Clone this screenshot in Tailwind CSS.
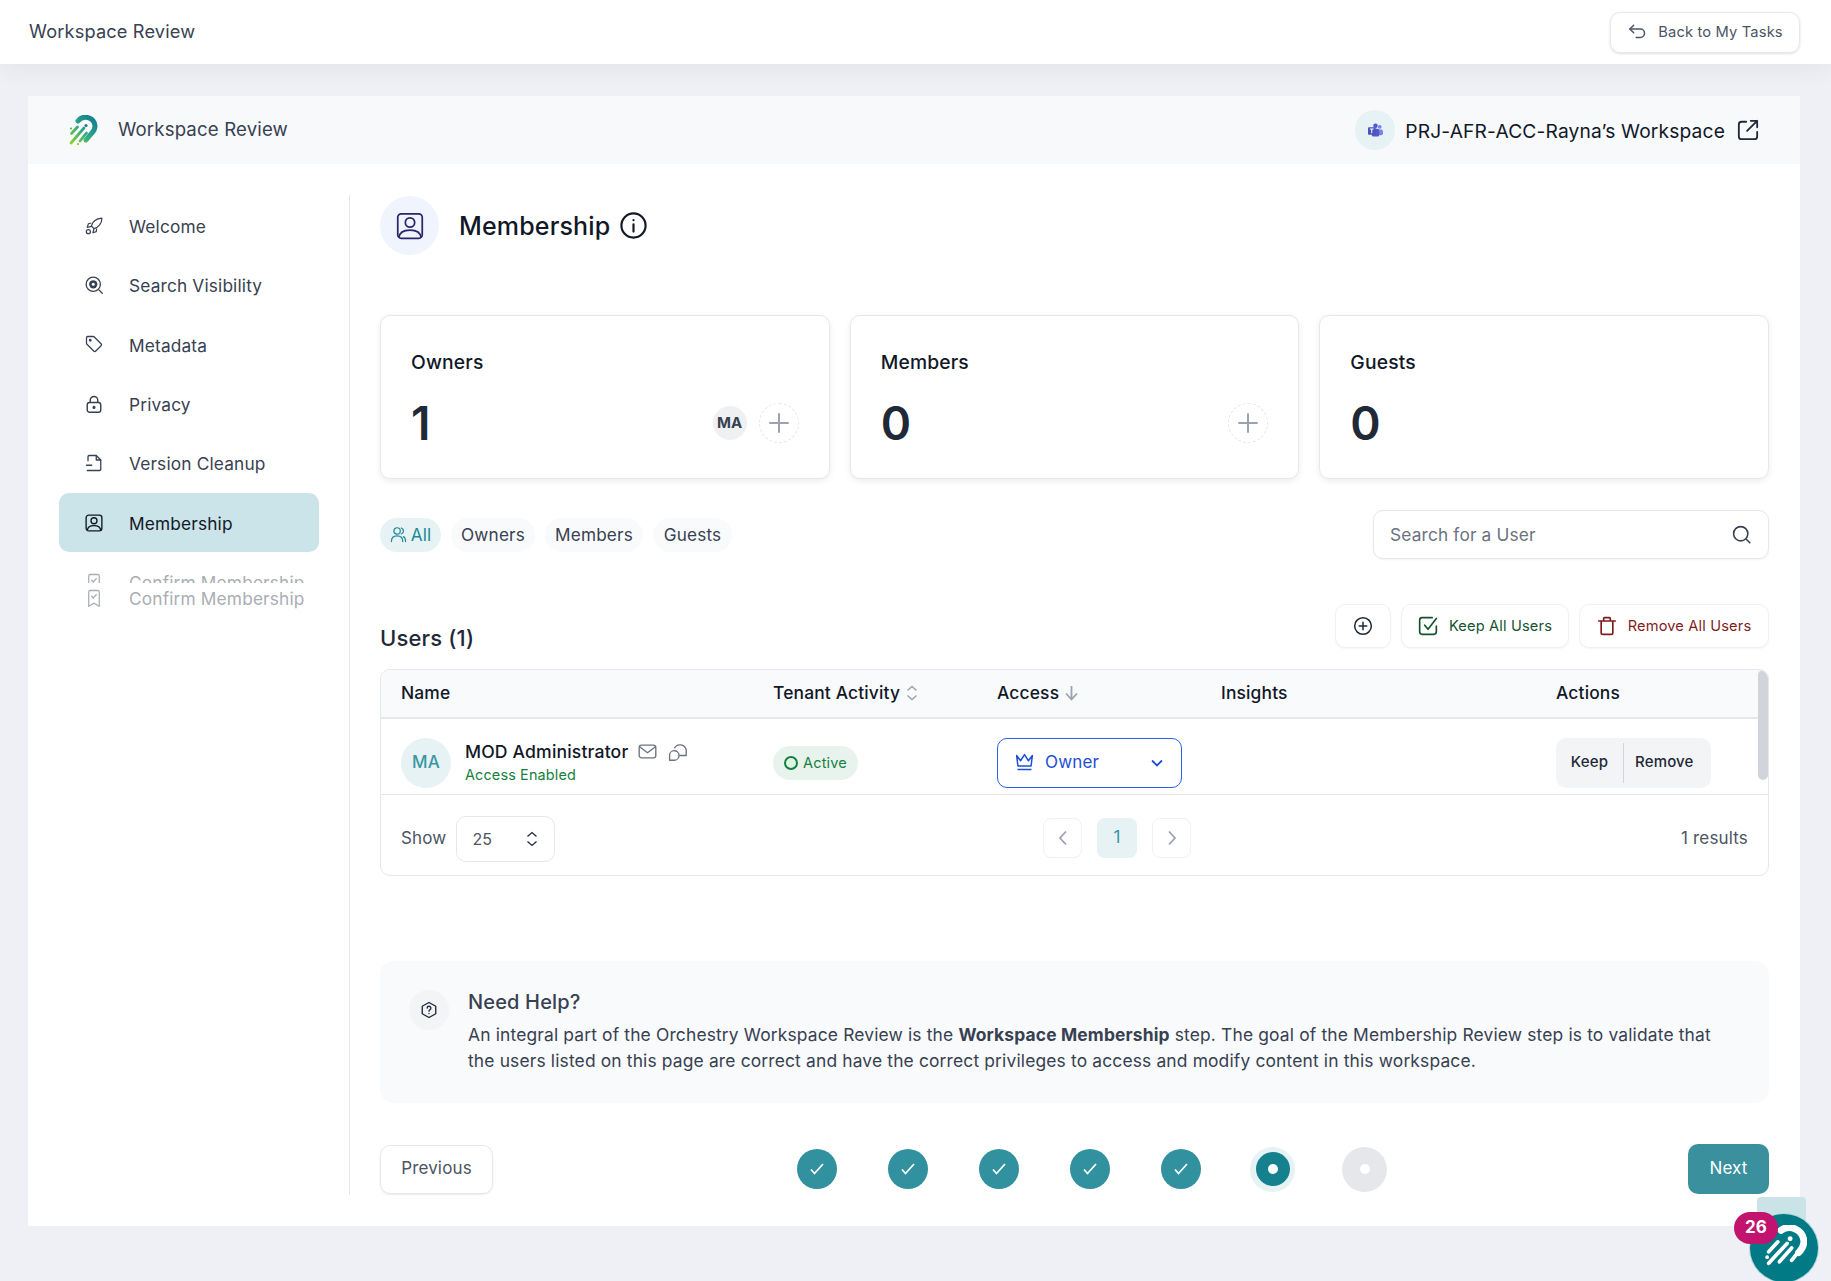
<!DOCTYPE html>
<html lang="en"><head><meta charset="utf-8"><title>Workspace Review</title>
<script src="https://cdn.jsdelivr.net/npm/@tailwindcss/browser@4"></script></head>
<body class="relative w-[1831px] h-[1281px] overflow-hidden bg-[#eff0f6] [font-family:Inter,sans-serif] tracking-[0.01em] text-[#374151]">
<svg width="0" height="0" class="absolute"><defs><linearGradient id="lg" gradientUnits="userSpaceOnUse" x1="3" y1="29" x2="26" y2="3"><stop offset="0" stop-color="#8fd321"/><stop offset=".5" stop-color="#2ea88a"/><stop offset="1" stop-color="#137f8e"/></linearGradient></defs></svg>

<header class="h-[64px] bg-white shadow-[0_6px_24px_rgba(0,0,0,0.05)] flex items-center justify-between pl-[29px] pr-[31px] relative">
  <span class="text-[18.2px] text-[#374151]">Workspace Review</span>
  <button class="h-[41px] w-[190px] rounded-[10px] border border-[#e5e7eb] shadow-sm flex items-center justify-center gap-[11px] text-[14.7px] text-[#4b5563]">
    <svg class="w-[20px] h-[20px]" viewBox="0 0 24 24" fill="none" stroke="#4b5563" stroke-width="1.800" stroke-linecap="round" stroke-linejoin="round"><path d="M8 4 3.500 8.500 8 13"/><path d="M3.500 8.500H16a5 5 0 0 1 0 10h-5"/></svg>
    Back to My Tasks</button>
</header>

<main class="relative mt-[32px] ml-[28px] mr-[31px] h-[1130px] bg-white flex flex-col">
  <div class="h-[68px] bg-[#f8f9fb] flex items-center justify-between pl-[40px] pr-[41px]">
    <div class="flex items-center gap-[20px]">
      <svg class="w-[30px] h-[30px]" viewBox="0 0 30 30" fill="none" stroke="url(#lg)" stroke-linecap="round"><path d="M10 6A9.500 9.500 0 0 1 27 11c0 3-1.500 5.500-3.500 7.500L18 25" stroke-width="5"/><path d="M16 13 3 28M9.500 12 3.500 18.500M18.500 18 12 26" stroke-width="2.700"/><circle cx="18" cy="10.500" r="1.600" fill="#137f8e" stroke="none"/><circle cx="3" cy="13.500" r="1.100" fill="#5ab84b" stroke="none"/><circle cx="10" cy="29" r="1.100" fill="#8fd321" stroke="none"/></svg>
      <span class="text-[18.6px] text-[#374151]">Workspace Review</span>
    </div>
    <div class="flex items-center">
      <span class="w-[40px] h-[40px] rounded-full bg-[#e6f2f3] flex items-center justify-center">
        <svg class="w-[15px] h-[15px]" viewBox="0 0 16 16"><circle cx="12.500" cy="4" r="2" fill="#7b83eb"/><rect x="10" y="7" width="6" height="6" rx="2" fill="#7b83eb"/><circle cx="8" cy="3" r="2.400" fill="#5059c9"/><rect x="4" y="6" width="8" height="8.500" rx="2" fill="#5059c9"/><rect x="0" y="4.500" width="8" height="8" rx="1" fill="#4b53bc"/><path d="M2 6.500h4M4 6.500v4.500" stroke="#fff" stroke-width="1.100"/></svg>
      </span>
      <span class="ml-[10px] text-[19.2px] text-[#111827] pt-[2px]">PRJ-AFR-ACC-Rayna’s Workspace</span>
      <svg class="ml-[12px] w-[22px] h-[22px]" viewBox="0 0 24 24" fill="none" stroke="#1f2937" stroke-width="2" stroke-linecap="round" stroke-linejoin="round"><path d="M10 3H5a3 3 0 0 0-3 3v13a3 3 0 0 0 3 3h14a3 3 0 0 0 3-3v-5"/><path d="M15 2h7v7M22 2 11 13"/></svg>
    </div>
  </div>

  <div class="flex flex-1 pt-[31px] pb-[31px]">
    <nav class="w-[322px] pt-[1px] pl-[31px] pr-[30px] border-r border-[#e5e7eb] text-[17.3px] text-[#374151]">
      <div class="h-[59.4px] flex items-center pl-[26px] gap-[26px]"><svg class="w-[18px] h-[18px] shrink-0" viewBox="0 0 24 24" fill="none" stroke="#374151" stroke-width="1.600" stroke-linejoin="round"><path d="M22.500 1.500C15.500 2 10 6 8.500 12l3.500 3.500c6-1.500 10.500-7 10.500-14z"/><path d="M8.500 8 4.500 9 3 14l5.500-1.500M15.500 15.500 15 19.500 10.500 21l1.500-5.500"/><circle cx="4.500" cy="19.500" r="2.700"/></svg><span class="pt-[2px]">Welcome</span></div>
      <div class="h-[59.4px] flex items-center pl-[26px] gap-[26px]"><svg class="w-[18px] h-[18px] shrink-0" viewBox="0 0 24 24" fill="none" stroke="#374151" stroke-width="1.700" stroke-linecap="round"><circle cx="11" cy="11" r="9.500"/><path d="m19 19 4 4"/><circle cx="11" cy="11" r="5.500" fill="#374151" stroke="none"/><circle cx="11" cy="11" r="2" fill="#fff" stroke="none"/></svg><span class="pt-[2px]">Search Visibility</span></div>
      <div class="h-[59.4px] flex items-center pl-[26px] gap-[26px]"><svg class="w-[18px] h-[18px] shrink-0" viewBox="0 0 24 24" fill="none" stroke="#374151" stroke-width="1.700" stroke-linejoin="round"><path d="M2 3.500A1.500 1.500 0 0 1 3.500 2H11a2 2 0 0 1 1.400.6l9 9a2 2 0 0 1 0 2.800l-7 7a2 2 0 0 1-2.800 0l-9-9A2 2 0 0 1 2 11z"/><circle cx="7" cy="7" r="1" fill="#374151"/></svg><span class="pt-[2px]">Metadata</span></div>
      <div class="h-[59.4px] flex items-center pl-[26px] gap-[26px]"><svg class="w-[18px] h-[18px] shrink-0" viewBox="0 0 24 24" fill="none" stroke="#374151" stroke-width="1.900" stroke-linejoin="round"><rect x="3" y="10" width="18" height="13" rx="3"/><path d="M7 10V7a5 5 0 0 1 10 0v3"/><circle cx="12" cy="16.500" r="1.100" fill="#374151"/></svg><span class="pt-[2px]">Privacy</span></div>
      <div class="h-[59.4px] flex items-center pl-[26px] gap-[26px]"><svg class="w-[18px] h-[18px] shrink-0" viewBox="0 0 24 24" fill="none" stroke="#374151" stroke-width="1.700" stroke-linecap="round" stroke-linejoin="round"><path d="M4 9V3.500A1.500 1.500 0 0 1 5.500 2H15l6 6v12.500a1.500 1.500 0 0 1-1.500 1.500H3"/><path d="M15 2v6h6M2 15h7"/></svg><span class="pt-[2px]">Version Cleanup</span></div>
      <div class="h-[59.4px] flex items-center pl-[26px] gap-[26px] bg-[#cbe4e9] rounded-[10px] text-[#111827]"><svg class="w-[18px] h-[18px] shrink-0" viewBox="0 0 24 24" fill="none" stroke="#111827" stroke-width="1.800"><rect x="1.500" y="1.500" width="21" height="21" rx="3.500"/><circle cx="12" cy="9" r="4"/><path d="M3 22c.5-5 4-6.500 9-6.500s8.500 1.500 9 6.500"/></svg><span class="pt-[2px]">Membership</span></div>
      <div class="h-[30.7px] overflow-hidden"><div class="h-[59.4px] flex items-center pl-[26px] gap-[26px] text-[#a9adb5]"><svg class="w-[18px] h-[18px] shrink-0" viewBox="0 0 24 24" fill="none" stroke="#a9adb5" stroke-width="1.700"><path d="M5 23V4a2 2 0 0 1 2-2h10a2 2 0 0 1 2 2v19l-7-4z"/><path d="m8.500 9 2.500 3 4.500-5"/></svg><span class="pt-[2px]">Confirm Membership</span></div></div>
      <div class="h-[30px] flex items-center pl-[26px] gap-[26px] text-[#a9adb5]"><svg class="w-[18px] h-[18px] shrink-0" viewBox="0 0 24 24" fill="none" stroke="#a9adb5" stroke-width="1.700"><path d="M5 23V4a2 2 0 0 1 2-2h10a2 2 0 0 1 2 2v19l-7-4z"/><path d="m8.500 9 2.500 3 4.500-5"/></svg><span class="pt-[2px]">Confirm Membership</span></div>
    </nav>

    <section class="flex-1 pt-[1px] pl-[30px] pr-[31px]">
      <div class="h-[59px] flex items-center">
        <span class="w-[59px] h-[59px] rounded-full bg-[#f0f4fd] flex items-center justify-center"><svg class="w-[28px] h-[28px]" viewBox="0 0 24 24" fill="none" stroke="#27276b" stroke-width="1.500"><rect x="1.500" y="1.500" width="21" height="21" rx="3"/><circle cx="12" cy="9" r="4"/><path d="M2.500 22c.5-5 4-6.500 9.500-6.500s9 1.500 9.500 6.500"/></svg></span>
        <h1 class="ml-[20px] text-[25px] font-medium text-[#111827] pt-[2px]">Membership</h1>
        <svg class="ml-[9px] w-[29px] h-[29px]" viewBox="0 0 24 24" fill="none" stroke="#111827" stroke-width="1.800" stroke-linecap="round"><circle cx="12" cy="12" r="10"/><path d="M12 11v6M12 7.500v.1"/></svg>
      </div>

      <div class="mt-[60px] grid grid-cols-3 gap-[20px]">
        <div class="h-[164px] rounded-[10px] border border-[#e5e7eb] shadow-[0_2px_6px_rgba(0,0,0,0.08)] pl-[30px] pr-[30px] pt-[33px]">
          <div class="text-[19.3px] font-medium text-[#111827] leading-[26px]">Owners</div>
          <div class="mt-[25px] flex items-center justify-between h-[46px]"><span class="text-[46px] font-semibold text-[#1f2937]">1</span>
            <div class="flex items-center gap-[12px]"><span class="w-[34px] h-[34px] rounded-full bg-[#eef0f2] flex items-center justify-center text-[15px] font-bold text-[#374151]">MA</span><span class="w-[40px] h-[40px] rounded-full border border-dashed border-[#e5e7eb] flex items-center justify-center"><svg class="w-[24px] h-[24px]" viewBox="0 0 24 24" stroke="#9ca3af" stroke-width="2" stroke-linecap="round"><path d="M12 3v18M3 12h18"/></svg></span></div></div>
        </div>
        <div class="h-[164px] rounded-[10px] border border-[#e5e7eb] shadow-[0_2px_6px_rgba(0,0,0,0.08)] pl-[30px] pr-[30px] pt-[33px]">
          <div class="text-[19.3px] font-medium text-[#111827] leading-[26px]">Members</div>
          <div class="mt-[25px] flex items-center justify-between h-[46px]"><span class="text-[46px] font-semibold text-[#1f2937]">0</span>
            <span class="w-[40px] h-[40px] rounded-full border border-dashed border-[#e5e7eb] flex items-center justify-center"><svg class="w-[24px] h-[24px]" viewBox="0 0 24 24" stroke="#9ca3af" stroke-width="2" stroke-linecap="round"><path d="M12 3v18M3 12h18"/></svg></span></div>
        </div>
        <div class="h-[164px] rounded-[10px] border border-[#e5e7eb] shadow-[0_2px_6px_rgba(0,0,0,0.08)] pl-[30px] pr-[30px] pt-[33px]">
          <div class="text-[19.3px] font-medium text-[#111827] leading-[26px]">Guests</div>
          <div class="mt-[25px] flex items-center h-[46px]"><span class="text-[46px] font-semibold text-[#1f2937]">0</span></div>
        </div>
      </div>

      <div class="mt-[31px] h-[49px] flex items-center justify-between">
        <div class="flex gap-[10px] text-[17.2px]">
          <span class="h-[34px] w-[61px] rounded-full bg-[#e6f2f3] text-[#1d8a96] flex items-center justify-center gap-[4px]"><svg class="w-[17px] h-[17px]" viewBox="0 0 24 24" fill="none" stroke="#1d8a96" stroke-width="1.700" stroke-linecap="round"><circle cx="10" cy="7" r="4.500"/><path d="M2 22c0-5 3-8 8-8s8 3 8 8M16 2.800a4.500 4.500 0 0 1 0 8.500M19 15c2 1 3 3.500 3 7"/></svg><span class="pt-[1px]">All</span></span>
          <span class="h-[34px] w-[84px] pt-[1px] rounded-full bg-[#f9fafb] text-[#374151] flex items-center justify-center">Owners</span>
          <span class="h-[34px] w-[98px] pt-[1px] rounded-full bg-[#f9fafb] text-[#374151] flex items-center justify-center">Members</span>
          <span class="h-[34px] w-[79px] pt-[1px] rounded-full bg-[#f9fafb] text-[#374151] flex items-center justify-center">Guests</span>
        </div>
        <div class="w-[396px] h-[49px] rounded-[10px] border border-[#e5e7eb] shadow-[0_1px_2px_rgba(0,0,0,0.05)] flex items-center justify-between pl-[16px] pr-[17px] text-[17.3px] text-[#6b7280]"><span class="pt-[1px]">Search for a User</span><svg class="w-[19px] h-[19px]" viewBox="0 0 24 24" fill="none" stroke="#374151" stroke-width="2" stroke-linecap="round"><circle cx="11" cy="11" r="9"/><path d="m18 18 4.500 4.500"/></svg></div>
      </div>

      <div class="mt-[45px] h-[44px] flex items-end justify-between">
        <h2 class="text-[22px] font-medium text-[#1f2937] leading-[28px] mb-[-4px]">Users (1)</h2>
        <div class="flex gap-[10px] text-[14.6px]">
          <span class="w-[56px] h-[44px] rounded-[10px] border border-[#eef0f2] shadow-[0_1px_2px_rgba(0,0,0,0.04)] flex items-center justify-center"><svg class="w-[20px] h-[20px]" viewBox="0 0 24 24" fill="none" stroke="#1f2937" stroke-width="1.800" stroke-linecap="round"><circle cx="12" cy="12" r="10"/><path d="M12 7.500v9M7.500 12h9"/></svg></span>
          <span class="w-[168px] h-[44px] rounded-[10px] border border-[#eef0f2] shadow-[0_1px_2px_rgba(0,0,0,0.04)] flex items-center justify-center gap-[11px] text-[#14532d]"><svg class="w-[20px] h-[20px]" viewBox="0 0 24 24" fill="none" stroke="#14532d" stroke-width="2" stroke-linecap="round" stroke-linejoin="round"><path d="M22 12v7a3 3 0 0 1-3 3H5a3 3 0 0 1-3-3V5a3 3 0 0 1 3-3h12"/><path d="m8 11 4 5 10-13"/></svg><span class="pt-[1px]">Keep All Users</span></span>
          <span class="w-[190px] h-[44px] rounded-[10px] border border-[#eef0f2] shadow-[0_1px_2px_rgba(0,0,0,0.04)] flex items-center justify-center gap-[11px] text-[#7f1d1d]"><svg class="w-[20px] h-[20px]" viewBox="0 0 24 24" fill="none" stroke="#7f1d1d" stroke-width="2" stroke-linecap="round" stroke-linejoin="round"><path d="M2 6h20M8 6V3a1 1 0 0 1 1-1h6a1 1 0 0 1 1 1v3M5 6v14a2 2 0 0 0 2 2h10a2 2 0 0 0 2-2V6"/></svg><span class="pt-[1px]">Remove All Users</span></span>
        </div>
      </div>

      <div class="relative mt-[21px] h-[207px] rounded-[10px] border border-[#e5e7eb] overflow-hidden flex flex-col">
        <div class="h-[49px] bg-[#f9fafb] border-b-2 border-[#e5e7eb] grid grid-cols-[372px_224px_224px_335px_1fr] pl-[20px] items-center text-[17.4px] font-medium text-[#111827] shrink-0">
          <span>Name</span>
          <span class="flex items-center gap-[6px]">Tenant Activity<svg class="w-[12px] h-[16px]" viewBox="0 0 12 16" fill="none" stroke="#9ca3af" stroke-width="1.500"><path d="m1.500 5.500 4.500-4 4.500 4M1.500 10.500l4.500 4 4.500-4"/></svg></span>
          <span class="flex items-center gap-[5px]">Access<svg class="w-[15px] h-[16px]" viewBox="0 0 15 16" fill="none" stroke="#9ca3af" stroke-width="1.800"><path d="M7.500 1v13M2 8.500l5.500 6 5.500-6"/></svg></span>
          <span>Insights</span>
          <span>Actions</span>
        </div>
        <div class="h-[76px] pt-[12px] border-b border-[#e5e7eb] grid grid-cols-[372px_224px_224px_335px_1fr] pl-[20px] items-center shrink-0">
          <div class="flex items-center">
            <span class="w-[50px] h-[50px] rounded-full bg-[#e6f2f3] flex items-center justify-center text-[17px] font-medium text-[#3a96a3]">MA</span>
            <div class="ml-[14px]">
              <div class="flex items-center text-[17.6px] font-medium text-[#111827] leading-[24px]">MOD Administrator
                <svg class="ml-[10px] w-[19px] h-[19px]" viewBox="0 0 24 24" fill="none" stroke="#6b7280" stroke-width="1.700" stroke-linejoin="round"><rect x="1.500" y="4" width="21" height="16" rx="3"/><path d="m2 6 10 7.500L22 6"/></svg>
                <svg class="ml-[11px] w-[19px] h-[19px]" viewBox="0 0 24 24" fill="none" stroke="#6b7280" stroke-width="1.700" stroke-linejoin="round"><path d="M8 8A8 8 0 0 1 23 10v7h-9"/><path d="M2 23v-7a6 6 0 1 1 6 7z"/></svg></div>
              <div class="text-[14.4px] text-[#15803d] leading-[22px]">Access Enabled</div>
            </div>
          </div>
          <span class="justify-self-start h-[34px] w-[85px] rounded-full bg-[#e9f3ee] flex items-center justify-center gap-[5px] text-[14.5px] text-[#15803d]"><span class="w-[14px] h-[14px] rounded-full border-2 border-[#15803d] bg-[#dcf5e4]"></span>Active</span>
          <div class="w-[185px] h-[50px] rounded-[10px] border-[1.5px] border-[#2563eb] flex items-center pl-[16px] pr-[18px] text-[17px] text-[#1d4ed8]"><svg class="w-[21px] h-[21px]" viewBox="0 0 24 24" fill="none" stroke="#1d4ed8" stroke-width="1.700" stroke-linejoin="round"><path d="M3 4l4.500 6L12 3l4.500 7L21 4l-1.500 12h-15z"/><path d="M4 20h16"/></svg><span class="ml-[10px]">Owner</span><svg class="ml-auto w-[12px] h-[8px]" viewBox="0 0 12 8" fill="none" stroke="#1d4ed8" stroke-width="1.800"><path d="m1 1.500 5 5 5-5"/></svg></div>
          <span></span>
          <div class="w-[155px] h-[50px] rounded-[10px] bg-[#f3f4f6] flex items-center text-[15px] font-medium text-[#1f2937]"><span class="w-[67px] text-center">Keep</span><span class="w-px h-[40px] bg-[#d1d5db]"></span><span class="pl-[11px]">Remove</span></div>
        </div>
        <div class="flex-1 relative flex items-center justify-between pt-[7px] pl-[20px] pr-[20px] text-[17px] text-[#4b5563]">
          <div class="flex items-center gap-[10px]">Show<span class="w-[99px] h-[46px] rounded-[10px] border border-[#e5e7eb] flex items-center justify-between pl-[15px] pr-[16px] text-[16px]">25<svg class="w-[12px] h-[16px]" viewBox="0 0 12 16" fill="none" stroke="#1f2937" stroke-width="1.300"><path d="m1.500 5.500 4.500-4 4.500 4M1.500 10.500l4.500 4 4.500-4"/></svg></span></div>
          <div class="absolute left-[662px] top-[23px] flex gap-[15px]">
            <span class="w-[39px] h-[40px] rounded-[8px] border border-[#f0f1f3] flex items-center justify-center"><svg class="w-[10px] h-[16px]" viewBox="0 0 10 16" fill="none" stroke="#9ca3af" stroke-width="1.800"><path d="M8 1.500 2 8l6 6.500"/></svg></span>
            <span class="w-[40px] h-[40px] rounded-[8px] bg-[#e6f2f3] flex items-center justify-center text-[#3a96a3]">1</span>
            <span class="w-[39px] h-[40px] rounded-[8px] border border-[#f0f1f3] flex items-center justify-center"><svg class="w-[10px] h-[16px]" viewBox="0 0 10 16" fill="none" stroke="#9ca3af" stroke-width="1.800"><path d="m2 1.500 6 6.500-6 6.500"/></svg></span>
          </div>
          <span>1 results</span>
        </div>
        <span class="absolute right-0 top-0 w-[10px] h-[110px] rounded-[5px] bg-[#d1d5db]"></span>
      </div>

      <div class="mt-[85px] h-[142px] rounded-[14px] bg-[#f9fafb] flex pl-[29px] pt-[29px]">
        <span class="w-[40px] h-[40px] rounded-full bg-[#f3f4f6] flex items-center justify-center shrink-0"><svg class="w-[18px] h-[18px]" viewBox="0 0 24 24" fill="none" stroke="#1f2937" stroke-width="1.800" stroke-linecap="round" stroke-linejoin="round"><path d="M12 2 21 7v10l-9 5-9-5V7z"/><path d="M9.500 9.500a2.500 2.500 0 1 1 3.500 2.300c-.7.400-1 .8-1 1.700M12 16.500v.1"/></svg></span>
        <div class="ml-[19px] -mt-[2px]">
          <div class="text-[20px] font-medium text-[#374151] leading-[28px]">Need Help?</div>
          <p class="mt-[6px] text-[17.4px] leading-[26px] text-[#374151] whitespace-nowrap">An integral part of the Orchestry Workspace Review is the <b class="font-bold">Workspace Membership</b> step. The goal of the Membership Review step is to validate that<br>the users listed on this page are correct and have the correct privileges to access and modify content in this workspace.</p>
        </div>
      </div>

      <div class="mt-[41px] h-[50px] flex items-center justify-between">
        <button class="w-[113px] h-[49px] rounded-[10px] border border-[#e5e7eb] shadow-[0_1px_2px_rgba(0,0,0,0.08)] text-[17px] text-[#4b5563]">Previous</button>
        <div class="flex items-center gap-[51px] ml-[1px]">
          <span class="w-[40px] h-[40px] rounded-full bg-[#31919e] flex items-center justify-center"><svg class="w-[18px] h-[18px]" viewBox="0 0 18 18" fill="none" stroke="#fff" stroke-width="1.800"><path d="m3 9.500 3.500 4L15 4"/></svg></span>
          <span class="w-[40px] h-[40px] rounded-full bg-[#31919e] flex items-center justify-center"><svg class="w-[18px] h-[18px]" viewBox="0 0 18 18" fill="none" stroke="#fff" stroke-width="1.800"><path d="m3 9.500 3.500 4L15 4"/></svg></span>
          <span class="w-[40px] h-[40px] rounded-full bg-[#31919e] flex items-center justify-center"><svg class="w-[18px] h-[18px]" viewBox="0 0 18 18" fill="none" stroke="#fff" stroke-width="1.800"><path d="m3 9.500 3.500 4L15 4"/></svg></span>
          <span class="w-[40px] h-[40px] rounded-full bg-[#31919e] flex items-center justify-center"><svg class="w-[18px] h-[18px]" viewBox="0 0 18 18" fill="none" stroke="#fff" stroke-width="1.800"><path d="m3 9.500 3.500 4L15 4"/></svg></span>
          <span class="w-[40px] h-[40px] rounded-full bg-[#31919e] flex items-center justify-center"><svg class="w-[18px] h-[18px]" viewBox="0 0 18 18" fill="none" stroke="#fff" stroke-width="1.800"><path d="m3 9.500 3.500 4L15 4"/></svg></span>
          <span class="w-[45px] h-[45px] rounded-full bg-[#e6f2f3] flex items-center justify-center -mx-[2px]"><span class="w-[34px] h-[34px] rounded-full bg-[#15818e] flex items-center justify-center"><span class="w-[10px] h-[10px] rounded-full bg-white"></span></span></span>
          <span class="w-[45px] h-[45px] rounded-full bg-[#e5e7eb] flex items-center justify-center -mx-[2px]"><span class="w-[10px] h-[10px] rounded-full bg-white"></span></span>
        </div>
        <button class="w-[81px] h-[50px] rounded-[10px] bg-[#3a909d] text-[17px] text-white">Next</button>
      </div>
    </section>
  </div>
</main>

<div class="absolute left-[1757px] top-[1197px] w-[49px] h-[60px] rounded-[4px] bg-[#c9e3e6]"></div>
<div class="absolute left-[1749px] top-[1213px] w-[70px] h-[70px] rounded-full bg-[#017a86] border border-white/70 flex items-center justify-center">
  <svg class="w-[46px] h-[46px]" viewBox="0 0 30 30" fill="none" stroke="#fff" stroke-linecap="round"><path d="M13 3.500A9.500 9.500 0 0 1 28 10.500c0 3-1.500 5.500-3.500 7.500" stroke-width="4.500"/><path d="M17 12 5 25M11 11 5 17.500M20 15l-8 9M24 18l-4 5" stroke-width="2.400"/><circle cx="19" cy="9" r="1.600" fill="#fff" stroke="none"/><circle cx="4" cy="21" r="1.200" fill="#fff" stroke="none"/></svg>
</div>
<div class="absolute left-[1734px] top-[1212px] w-[44px] h-[32px] rounded-full bg-[#c2146f] flex items-center justify-center text-[17px] font-bold text-white">26</div>
</body></html>
